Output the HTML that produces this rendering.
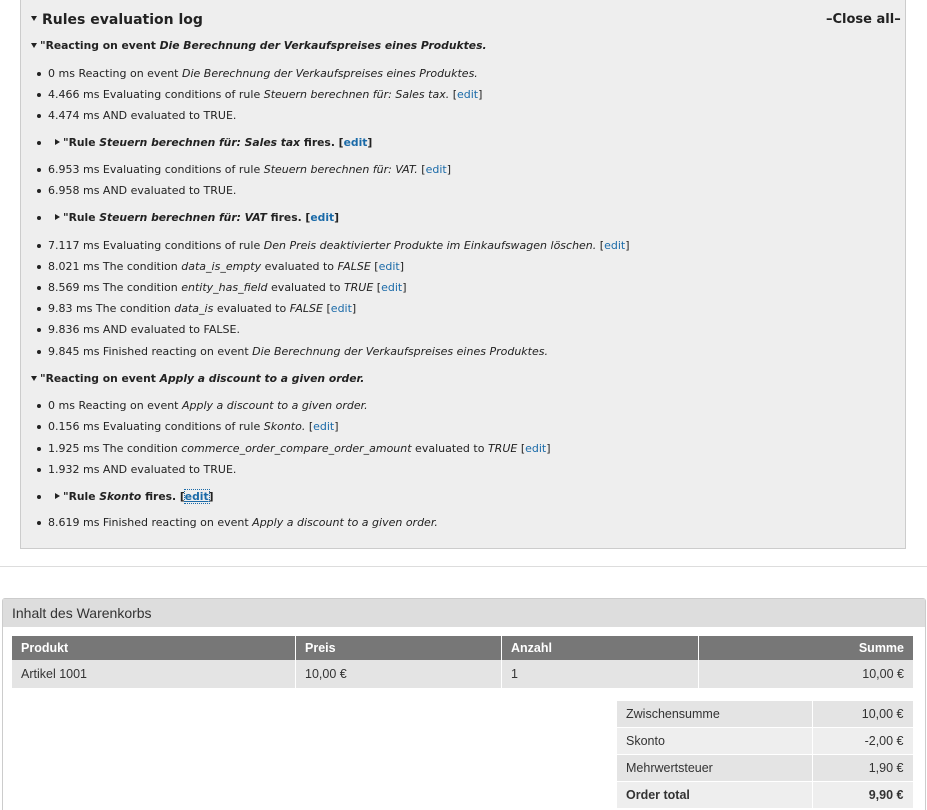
<!DOCTYPE html>
<html><head><meta charset="utf-8"><style>
html{height:810px;overflow:hidden}
body{margin:0;width:927px;height:810px;background:#fff;position:relative;overflow:hidden;font-family:"DejaVu Sans","Liberation Sans",sans-serif;color:#222}
.box{position:absolute;left:20px;top:-2px;width:884px;height:549px;background:#eee;border:1px solid #ccc}
.l{position:absolute;font-size:11px;line-height:16px;white-space:nowrap}
.h{font-weight:bold;font-size:10.75px}
a{color:#1a6aa8;text-decoration:none}
.b{position:absolute;width:4px;height:4px;border-radius:50%;background:#222}
.td{position:absolute;width:0;height:0;border-left:3.5px solid transparent;border-right:3.5px solid transparent;border-top:5px solid #222}
.tr{position:absolute;width:0;height:0;border-top:3.5px solid transparent;border-bottom:3.5px solid transparent;border-left:5px solid #222}
.cart{position:absolute;left:2px;top:598px;width:922px;height:212px;border:1px solid #ccc;border-bottom:0;border-radius:3px 3px 0 0;background:#fff}
.ch{height:28px;background:#ddd;font-family:"Liberation Sans Narrow","Liberation Sans",sans-serif;font-size:14px;line-height:28px;padding-left:9px;color:#333}
table{border-collapse:collapse;position:absolute;font-family:"Liberation Sans Narrow","Liberation Sans",sans-serif;font-size:12.5px}
td,th{padding:0 9px;text-align:left;border-right:1px solid #fff}
</style></head><body>
<div class="box"></div>
<div class="td" style="left:31px;top:16px"></div>
<div class="l h" style="left:42px;top:11px;font-size:14px;line-height:18px">Rules evaluation log</div>
<div class="l h" style="left:826px;top:11px;font-size:13px;line-height:18px">–Close all–</div>

<div class="td" style="left:31px;top:43px"></div>
<div class="l h" style="left:40px;top:38px">"Reacting on event <i>Die Berechnung der Verkaufspreises eines Produktes.</i></div>

<div class="b" style="left:37px;top:72px"></div><div class="l" style="left:48px;top:66px">0 ms Reacting on event <i>Die Berechnung der Verkaufspreises eines Produktes.</i></div>
<div class="b" style="left:37px;top:93px"></div><div class="l" style="left:48px;top:87px">4.466 ms Evaluating conditions of rule <i>Steuern berechnen für: Sales tax.</i> [<a>edit</a>]</div>
<div class="b" style="left:37px;top:114px"></div><div class="l" style="left:48px;top:108px">4.474 ms AND evaluated to TRUE.</div>
<div class="b" style="left:37px;top:141px"></div><div class="tr" style="left:55px;top:139px"></div><div class="l h" style="left:63px;top:135px">"Rule <i>Steuern berechnen für: Sales tax</i> fires. [<a>edit</a>]</div>
<div class="b" style="left:37px;top:168px"></div><div class="l" style="left:48px;top:162px">6.953 ms Evaluating conditions of rule <i>Steuern berechnen für: VAT.</i> [<a>edit</a>]</div>
<div class="b" style="left:37px;top:189px"></div><div class="l" style="left:48px;top:183px">6.958 ms AND evaluated to TRUE.</div>
<div class="b" style="left:37px;top:216px"></div><div class="tr" style="left:55px;top:214px"></div><div class="l h" style="left:63px;top:210px">"Rule <i>Steuern berechnen für: VAT</i> fires. [<a>edit</a>]</div>
<div class="b" style="left:37px;top:244px"></div><div class="l" style="left:48px;top:238px">7.117 ms Evaluating conditions of rule <i>Den Preis deaktivierter Produkte im Einkaufswagen löschen.</i> [<a>edit</a>]</div>
<div class="b" style="left:37px;top:265px"></div><div class="l" style="left:48px;top:259px">8.021 ms The condition <i>data_is_empty</i> evaluated to <i>FALSE</i> [<a>edit</a>]</div>
<div class="b" style="left:37px;top:286px"></div><div class="l" style="left:48px;top:280px">8.569 ms The condition <i>entity_has_field</i> evaluated to <i>TRUE</i> [<a>edit</a>]</div>
<div class="b" style="left:37px;top:307px"></div><div class="l" style="left:48px;top:301px">9.83 ms The condition <i>data_is</i> evaluated to <i>FALSE</i> [<a>edit</a>]</div>
<div class="b" style="left:37px;top:328px"></div><div class="l" style="left:48px;top:322px">9.836 ms AND evaluated to FALSE.</div>
<div class="b" style="left:37px;top:350px"></div><div class="l" style="left:48px;top:344px">9.845 ms Finished reacting on event <i>Die Berechnung der Verkaufspreises eines Produktes.</i></div>

<div class="td" style="left:31px;top:376px"></div>
<div class="l h" style="left:40px;top:371px">"Reacting on event <i>Apply a discount to a given order.</i></div>
<div class="b" style="left:37px;top:404px"></div><div class="l" style="left:48px;top:398px">0 ms Reacting on event <i>Apply a discount to a given order.</i></div>
<div class="b" style="left:37px;top:425px"></div><div class="l" style="left:48px;top:419px">0.156 ms Evaluating conditions of rule <i>Skonto.</i> [<a>edit</a>]</div>
<div class="b" style="left:37px;top:447px"></div><div class="l" style="left:48px;top:441px">1.925 ms The condition <i>commerce_order_compare_order_amount</i> evaluated to <i>TRUE</i> [<a>edit</a>]</div>
<div class="b" style="left:37px;top:468px"></div><div class="l" style="left:48px;top:462px">1.932 ms AND evaluated to TRUE.</div>
<div class="b" style="left:37px;top:495px"></div><div class="tr" style="left:55px;top:493px"></div><div class="l h" style="left:63px;top:489px">"Rule <i>Skonto</i> fires. [<a style="outline:1px dotted #1a6aa8;text-decoration:underline">edit</a>]</div>
<div class="b" style="left:37px;top:521px"></div><div class="l" style="left:48px;top:515px">8.619 ms Finished reacting on event <i>Apply a discount to a given order.</i></div>

<div style="position:absolute;left:0;top:566px;width:927px;height:1px;background:#ddd"></div>

<div class="cart"><div class="ch">Inhalt des Warenkorbs</div></div>
<table style="left:12px;top:636px;width:901px">
<tr style="background:#777;color:#fff;height:24px"><th style="width:265px">Produkt</th><th style="width:187px">Preis</th><th style="width:178px">Anzahl</th><th style="text-align:right;border-right:0">Summe</th></tr>
<tr style="background:#e4e4e4;height:28px;color:#333"><td>Artikel 1001</td><td>10,00 €</td><td>1</td><td style="text-align:right;border-right:0">10,00 €</td></tr>
</table>
<table style="left:617px;top:701px;width:296px;color:#333">
<tr style="background:#e4e4e4;height:26px"><td style="width:177px">Zwischensumme</td><td style="text-align:right;border-right:0">10,00 €</td></tr>
<tr><td colspan="2" style="padding:0;background:#fff;height:1px"></td></tr>
<tr style="background:#eee;height:26px"><td>Skonto</td><td style="text-align:right;border-right:0">-2,00 €</td></tr>
<tr><td colspan="2" style="padding:0;background:#fff;height:1px"></td></tr>
<tr style="background:#e4e4e4;height:26px"><td>Mehrwertsteuer</td><td style="text-align:right;border-right:0">1,90 €</td></tr>
<tr><td colspan="2" style="padding:0;background:#fff;height:1px"></td></tr>
<tr style="background:#eee;height:26px;font-weight:bold"><td>Order total</td><td style="text-align:right;border-right:0">9,90 €</td></tr>
</table>
</body></html>
